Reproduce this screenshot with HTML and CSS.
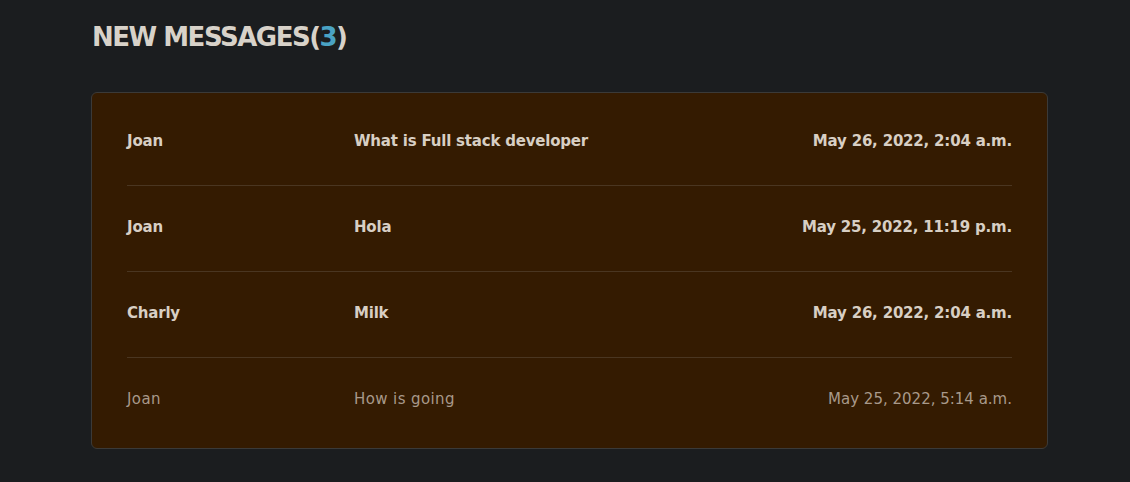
FILE: index.html
```html
<!DOCTYPE html>
<html>
<head>
<meta charset="utf-8">
<link rel="stylesheet" href="styles.css">
</head>
<body>
<div class="page">
  <h1 class="title">NEW MESSAGES<span class="paren">(</span><span class="count">3</span><span class="paren">)</span></h1>
  <div class="card">
    <div class="row unread">
      <div class="from">Joan</div>
      <div class="subject">What is Full stack developer</div>
      <div class="date">May 26, 2022, 2:04 a.m.</div>
    </div>
    <div class="row unread">
      <div class="from">Joan</div>
      <div class="subject">Hola</div>
      <div class="date">May 25, 2022, 11:19 p.m.</div>
    </div>
    <div class="row unread">
      <div class="from">Charly</div>
      <div class="subject">Milk</div>
      <div class="date">May 26, 2022, 2:04 a.m.</div>
    </div>
    <div class="row read">
      <div class="from">Joan</div>
      <div class="subject">How is going</div>
      <div class="date">May 25, 2022, 5:14 a.m.</div>
    </div>
  </div>
</div>
</body>
</html>
```
FILE: styles.css
```css
html, body {
  margin: 0;
  padding: 0;
  background: #1b1d1f;
}
body {
  font-family: "DejaVu Sans", "Open Sans", sans-serif;
  height: 482px;
  overflow: hidden;
}
.page {
  padding: 19px 82px 0 91px;
}
.title {
  margin: 0 0 37px 1px;
  font-size: 26px;
  line-height: 36px;
  font-weight: 700;
  color: #d8d2c9;
  letter-spacing: -1.5px;
}
.count {
  color: #4aa3c4;
}
.card {
  background: #341b01;
  border: 1px solid #3b3a38;
  border-radius: 6px;
  padding: 7px 35px 4px 35px;
}
.row {
  display: grid;
  grid-template-columns: 227px 1fr auto;
  align-items: center;
  box-sizing: border-box;
  height: 86px;
  padding-bottom: 4px;
  border-bottom: 1px solid #4a3621;
  font-size: 15px;
}
.row:last-child {
  border-bottom: none;
}
.unread {
  font-weight: 700;
  color: #d8cfc4;
  letter-spacing: -0.2px;
}
.read {
  font-weight: 400;
  color: #a8998a;
}
.read .from,
.read .subject {
  letter-spacing: 0.4px;
}
.date {
  text-align: right;
}
```
